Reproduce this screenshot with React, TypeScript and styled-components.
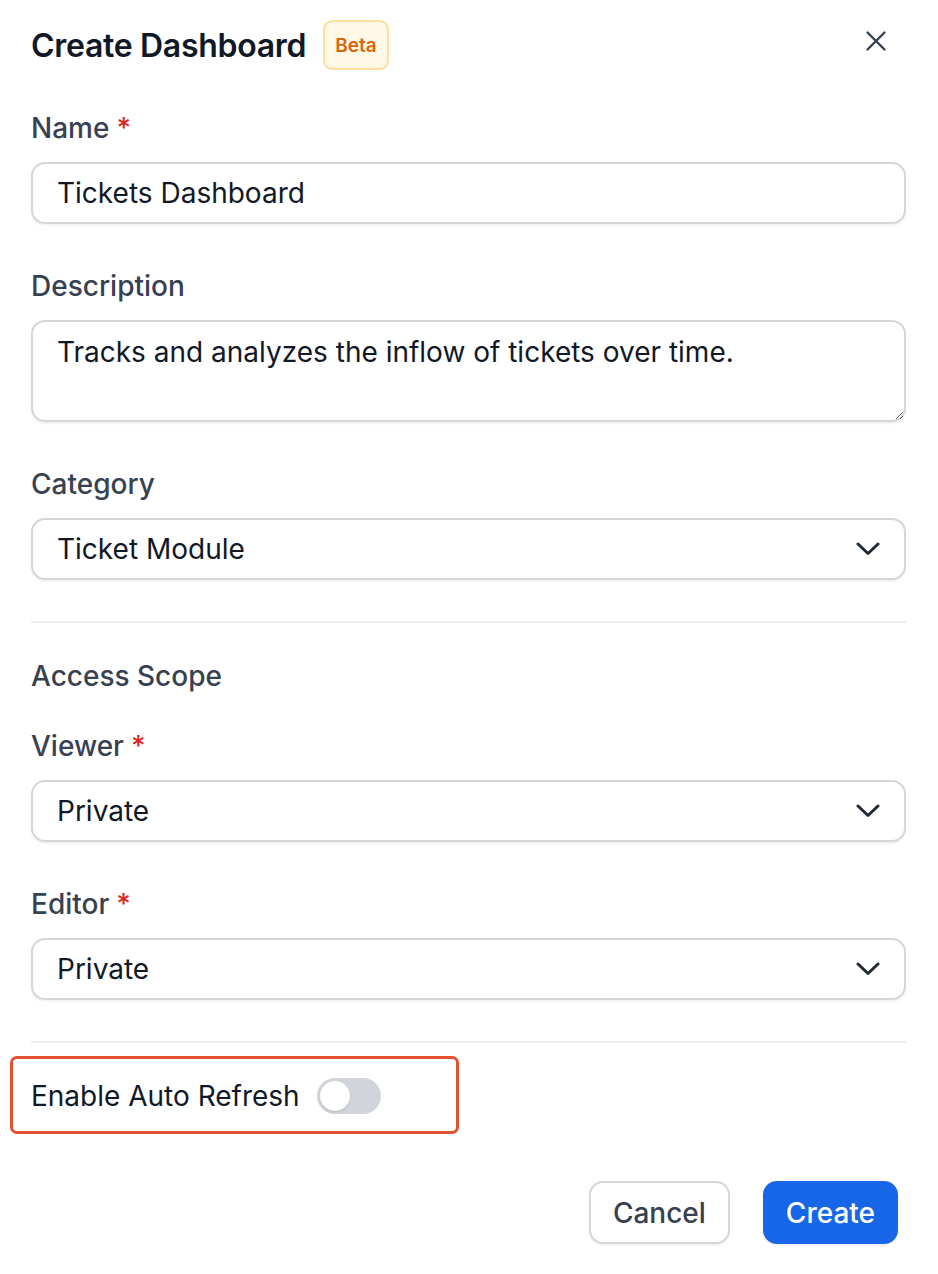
import React, { useState } from "react";
import styled, { createGlobalStyle } from "styled-components";

const GlobalStyle = createGlobalStyle`
  * { box-sizing: border-box; }
  body {
    margin: 0;
    background: #ffffff;
    font-family: Inter, "Noto Sans", "Liberation Sans", sans-serif;
    color: #111827;
  }
`;

const Modal = styled.div`
  width: 938px;
  padding: 20px 32px 28px 31px;
  display: flex;
  flex-direction: column;
`;

const Header = styled.div`
  display: flex;
  align-items: center;
  height: 50px;
  margin-bottom: 42px;
`;

const Title = styled.h1`
  margin: 0;
  font-size: 32px;
  font-weight: 600;
  color: #111827;
  letter-spacing: -0.3px;
`;

const Badge = styled.span`
  margin-left: 17px;
  height: 50px;
  padding: 0 10px;
  display: inline-flex;
  align-items: center;
  background: #fff8e6;
  border: 2px solid #fbe0a0;
  border-radius: 9px;
  color: #d9650b;
  font-size: 19px;
  font-weight: 600;
`;

const CloseButton = styled.button`
  margin-left: auto;
  margin-right: 20px;
  margin-bottom: 8px;
  padding: 0;
  border: none;
  background: none;
  display: flex;
  color: #374151;
  cursor: pointer;
`;

const Field = styled.div`
  display: flex;
  flex-direction: column;
  gap: 18px;
  & + & {
    margin-top: 46px;
  }
`;

const Label = styled.label`
  font-size: 28px;
  line-height: 32px;
  font-weight: 500;
  color: #374151;
`;

const Required = styled.span`
  color: #dc2626;
  margin-left: 7px;
`;

const controlBase = `
  width: 100%;
  border: 2px solid #d4d6da;
  border-radius: 14px;
  background: #ffffff;
  box-shadow: 0 2px 2px rgba(17, 24, 39, 0.05);
  font-family: Inter, "Noto Sans", "Liberation Sans", sans-serif;
  font-size: 28px;
  color: #111827;
  outline: none;
`;

const TextInput = styled.input`
  ${controlBase}
  height: 62px;
  padding: 0 24px;
`;

const TextArea = styled.textarea`
  ${controlBase}
  height: 102px;
  padding: 13px 24px;
  line-height: 34px;
  resize: vertical;
`;

const SelectBox = styled.div`
  ${controlBase}
  height: 62px;
  padding: 0 24px 0 24px;
  display: flex;
  align-items: center;
  justify-content: space-between;
  cursor: pointer;
`;

const Divider = styled.hr<{ $top: number; $bottom: number }>`
  border: none;
  border-top: 2px solid #eceef1;
  margin: ${({ $top }) => $top}px 0 ${({ $bottom }) => $bottom}px;
`;

const SectionTitle = styled.div`
  font-size: 28px;
  line-height: 32px;
  font-weight: 500;
  color: #374151;
  margin-bottom: 38px;
`;

const RefreshRow = styled.div`
  margin-left: -21px;
  width: 449px;
  height: 78px;
  padding: 2px 0 0 18px;
  border: 3px solid #e5502f;
  border-radius: 7px;
  display: flex;
  align-items: center;
  gap: 17px;
`;

const RefreshLabel = styled.span`
  font-size: 28px;
  color: #111827;
`;

const Track = styled.button<{ $on: boolean }>`
  width: 64px;
  height: 36px;
  padding: 3px;
  border: none;
  border-radius: 18px;
  background: ${({ $on }) => ($on ? "#1766e8" : "#d1d5db")};
  display: flex;
  justify-content: ${({ $on }) => ($on ? "flex-end" : "flex-start")};
  cursor: pointer;
`;

const Knob = styled.span`
  width: 30px;
  height: 30px;
  border-radius: 50%;
  background: #ffffff;
  box-shadow: 0 1px 2px rgba(0, 0, 0, 0.15);
`;

const Footer = styled.div`
  display: flex;
  justify-content: flex-end;
  gap: 33px;
  margin-top: 47px;
  padding-right: 8px;
`;

const Button = styled.button<{ $primary?: boolean }>`
  height: 63px;
  padding: 0 ${({ $primary }) => ($primary ? 21 : 22)}px;
  border-radius: 14px;
  border: 2px solid ${({ $primary }) => ($primary ? "#1766e8" : "#d4d6da")};
  background: ${({ $primary }) => ($primary ? "#1766e8" : "#ffffff")};
  color: ${({ $primary }) => ($primary ? "#ffffff" : "#374151")};
  box-shadow: 0 2px 2px rgba(17, 24, 39, 0.05);
  font-family: Inter, "Noto Sans", "Liberation Sans", sans-serif;
  font-size: 28px;
  font-weight: 500;
  cursor: pointer;
`;

const Chevron = () => (
  <svg width="24" height="14" viewBox="0 0 24 14" fill="none">
    <path
      d="M2 2 L12 11.5 L22 2"
      stroke="#1f2937"
      strokeWidth="3"
      strokeLinecap="round"
      strokeLinejoin="round"
    />
  </svg>
);

const CloseIcon = () => (
  <svg width="20" height="20" viewBox="0 0 20 20" fill="none">
    <path
      d="M1.5 1.5 L18.5 18.5 M18.5 1.5 L1.5 18.5"
      stroke="currentColor"
      strokeWidth="2.4"
      strokeLinecap="round"
    />
  </svg>
);

function Select({ value }: { value: string }) {
  return (
    <SelectBox>
      <span>{value}</span>
      <Chevron />
    </SelectBox>
  );
}

export default function App() {
  const [autoRefresh, setAutoRefresh] = useState(false);

  return (
    <>
      <GlobalStyle />
      <Modal>
        <Header>
          <Title>Create Dashboard</Title>
          <Badge>Beta</Badge>
          <CloseButton aria-label="Close">
            <CloseIcon />
          </CloseButton>
        </Header>

        <Field>
          <Label>
            Name<Required>*</Required>
          </Label>
          <TextInput defaultValue="Tickets Dashboard" />
        </Field>
        <Field>
          <Label>Description</Label>
          <TextArea defaultValue="Tracks and analyzes the inflow of tickets over time." />
        </Field>
        <Field>
          <Label>Category</Label>
          <Select value="Ticket Module" />
        </Field>

        <Divider $top={41} $bottom={37} />

        <SectionTitle>Access Scope</SectionTitle>
        <Field>
          <Label>
            Viewer<Required>*</Required>
          </Label>
          <Select value="Private" />
        </Field>
        <Field>
          <Label>
            Editor<Required>*</Required>
          </Label>
          <Select value="Private" />
        </Field>

        <Divider $top={41} $bottom={13} />

        <RefreshRow>
          <RefreshLabel>Enable Auto Refresh</RefreshLabel>
          <Track $on={autoRefresh} onClick={() => setAutoRefresh(!autoRefresh)}>
            <Knob />
          </Track>
        </RefreshRow>

        <Footer>
          <Button>Cancel</Button>
          <Button $primary>Create</Button>
        </Footer>
      </Modal>
    </>
  );
}
